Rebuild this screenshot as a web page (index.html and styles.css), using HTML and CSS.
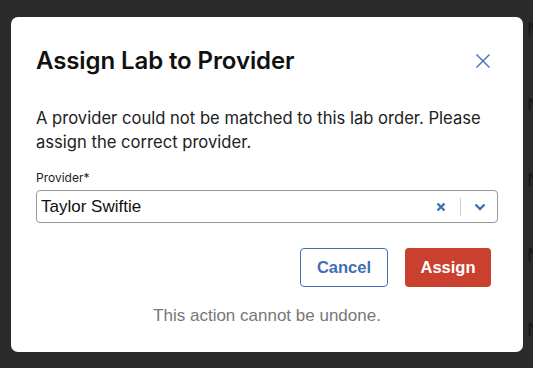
FILE: index.html
```html
<!DOCTYPE html>
<html lang="en">
<head>
    <meta charset="UTF-8">
    <meta name="viewport" content="width=device-width, initial-scale=1.0">
    <title>Assign Lab to Provider</title>
    <link rel="stylesheet" href="styles.css">
</head>
<body>
    <div class="page-behind">
        <div class="row">N</div>
        <div class="row">N</div>
        <div class="row">N</div>
        <div class="row">N</div>
        <div class="row">N</div>
    </div>

    <div class="modal">
        <div class="modal-header">
            <h2>Assign Lab to Provider</h2>
            <button type="button" class="close-btn" aria-label="Close">
                <svg width="16" height="16" viewBox="0 0 16 16">
                    <path d="M1.5 1.5 L14.5 14.5 M14.5 1.5 L1.5 14.5" stroke="#3f6fb5" stroke-width="1.4" fill="none"/>
                </svg>
            </button>
        </div>

        <p class="message">A provider could not be matched to this lab order. Please assign the correct provider.</p>

        <label class="field-label">Provider*</label>
        <div class="select">
            <span class="select-value">Taylor Swiftie</span>
            <span class="select-icons">
                <svg class="clear-icon" width="10" height="10" viewBox="0 0 10 10">
                    <path d="M1.5 1.5 L8.5 8.5 M8.5 1.5 L1.5 8.5" stroke="#3f6fb5" stroke-width="2.4" fill="none"/>
                </svg>
                <span class="divider"></span>
                <svg class="chevron" width="12" height="8" viewBox="0 0 12 8">
                    <path d="M1.5 1.5 L6 6 L10.5 1.5" stroke="#3f6fb5" stroke-width="2.4" fill="none"/>
                </svg>
            </span>
        </div>

        <div class="actions">
            <button type="button" class="btn btn-cancel">Cancel</button>
            <button type="button" class="btn btn-assign">Assign</button>
        </div>

        <p class="note">This action cannot be undone.</p>
    </div>
</body>
</html>
```

FILE: styles.css
```css
body {
    margin: 0;
    padding: 0;
    width: 533px;
    height: 368px;
    background-color: #2b2b2b;
    font-family: Inter, "Liberation Sans", sans-serif;
    overflow: hidden;
    position: relative;
}

.page-behind {
    display: flex;
    flex-direction: column;
    align-items: flex-end;
    padding-top: 20px;
    gap: 56px;
    margin-right: -8px;
}

.row {
    font-family: "Liberation Sans", sans-serif;
    font-size: 19px;
    line-height: 19px;
    color: #1a1717;
}

.modal {
    position: absolute;
    left: 11px;
    top: 17px;
    width: 512px;
    height: 335px;
    box-sizing: border-box;
    background-color: #fff;
    border-radius: 7px;
    padding: 28px 25px 0 25px;
}

.modal-header {
    display: flex;
    align-items: center;
    justify-content: space-between;
}

.modal-header h2 {
    margin: 0;
    font-size: 24px;
    font-weight: 600;
    line-height: 32px;
    color: #111;
    letter-spacing: -0.1px;
}

.close-btn {
    background: none;
    border: none;
    padding: 0;
    margin-right: 7px;
    width: 16px;
    height: 16px;
    display: flex;
    cursor: pointer;
}

.message {
    margin: 29px 0 0 0;
    font-size: 16.6px;
    line-height: 24px;
    color: #222;
}

.field-label {
    display: block;
    margin-top: 16px;
    font-size: 12px;
    line-height: 16px;
    color: #222;
}

.select {
    margin-top: 4px;
    height: 33px;
    box-sizing: border-box;
    border: 1px solid #9a9a9a;
    border-radius: 4px;
    display: flex;
    align-items: center;
    justify-content: space-between;
    padding: 0 11px 0 4px;
}

.select-value {
    font-family: "Liberation Sans", sans-serif;
    font-size: 17px;
    color: #111;
}

.select-icons {
    display: flex;
    align-items: center;
}

.divider {
    width: 1px;
    height: 18px;
    background-color: #ccc;
    margin: 0 13px 0 14px;
}

.actions {
    display: flex;
    justify-content: flex-end;
    gap: 17px;
    margin-top: 25px;
    margin-right: 7px;
}

.btn {
    height: 39px;
    border-radius: 4px;
    font-family: "Liberation Sans", sans-serif;
    font-size: 16.5px;
    font-weight: bold;
    cursor: pointer;
}

.btn-cancel {
    width: 88px;
    background-color: #fff;
    color: #3f6fb5;
    border: 1px solid #3f6fb5;
}

.btn-assign {
    width: 86px;
    background-color: #c9402f;
    color: #fff;
    border: none;
}

.note {
    margin: 19px 0 0 0;
    text-align: center;
    font-family: "Liberation Sans", sans-serif;
    font-size: 17px;
    color: #777;
}
```
